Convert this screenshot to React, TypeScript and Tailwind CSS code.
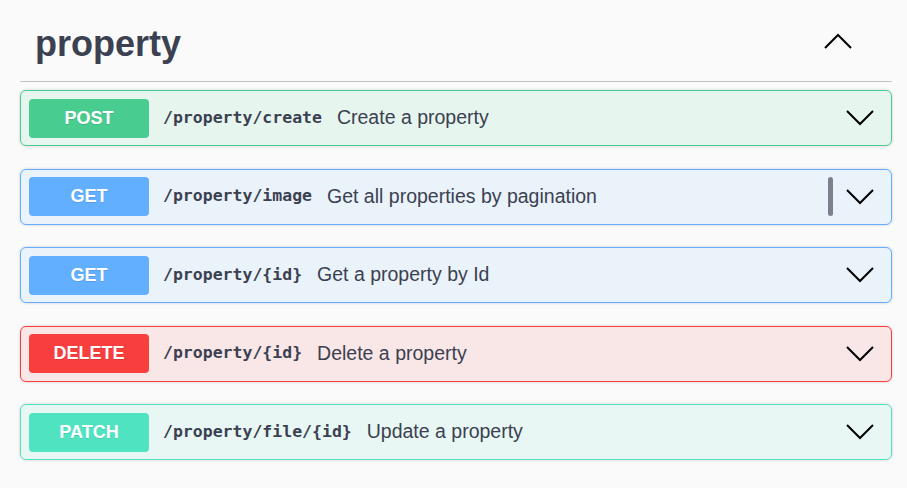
import React from "react";

type Op = {
  method: string;
  path: string;
  desc: string;
  badge: string;
  bg: string;
  border: string;
  handle?: boolean;
};

const ops: Op[] = [
  { method: "POST", path: "/property/create", desc: "Create a property", badge: "bg-[#49cc90]", bg: "bg-[rgba(73,204,144,0.1)]", border: "border-[#49cc90]" },
  { method: "GET", path: "/property/image", desc: "Get all properties by pagination", badge: "bg-[#61affe]", bg: "bg-[rgba(97,175,254,0.1)]", border: "border-[#61affe]", handle: true },
  { method: "GET", path: "/property/{id}", desc: "Get a property by Id", badge: "bg-[#61affe]", bg: "bg-[rgba(97,175,254,0.1)]", border: "border-[#61affe]" },
  { method: "DELETE", path: "/property/{id}", desc: "Delete a property", badge: "bg-[#f93e3e]", bg: "bg-[rgba(249,62,62,0.1)]", border: "border-[#f93e3e]" },
  { method: "PATCH", path: "/property/file/{id}", desc: "Update a property", badge: "bg-[#50e3c2]", bg: "bg-[rgba(80,227,194,0.1)]", border: "border-[#50e3c2]" },
];

function Chevron({ up }: { up?: boolean }) {
  return (
    <svg width="28" height="16" viewBox="0 0 28 16" className="shrink-0">
      <polyline
        points={up ? "1,15 14,2 27,15" : "1,1 14,14 27,1"}
        fill="none"
        stroke="#000"
        strokeWidth="2"
      />
    </svg>
  );
}

export default function App() {
  return (
    <div className="min-h-screen bg-[#fafafa] pl-[20px] pr-[15px] font-['Liberation_Sans',Arial,sans-serif] text-[#3b4151]">
      <div className="flex h-[82px] items-center justify-between border-b border-[rgba(59,65,81,0.3)] pl-[15px] pr-[40px]">
        <h3 className="pt-[7px] text-[36px] font-bold leading-none text-[#3b4151]">property</h3>
        <Chevron up />
      </div>
      <div className="pt-[8px]">
        {ops.map((op, i) => (
          <div
            key={i}
            className={`mb-[22.5px] flex h-[56px] items-center rounded-[6px] border pl-[8px] pr-[17px] shadow-[0_0_3px_rgba(0,0,0,0.19)] ${op.bg} ${op.border}`}
          >
            <div
              className={`flex h-[39px] w-[120px] shrink-0 items-center justify-center rounded-[4px] text-[18px] font-bold text-white [text-shadow:0_1px_0_rgba(0,0,0,0.1)] ${op.badge}`}
            >
              {op.method}
            </div>
            <span className="ml-[14px] font-['DejaVu_Sans_Mono',monospace] text-[16.5px] font-bold text-[#3b4151]">
              {op.path}
            </span>
            <span className="ml-[15px] text-[19.5px] text-[#3b4151]">{op.desc}</span>
            <div className="flex-1" />
            {op.handle && (
              <div className="mr-[13px] h-[39px] w-[5px] rounded-full bg-[#7d808c]" />
            )}
            <Chevron />
          </div>
        ))}
      </div>
    </div>
  );
}
